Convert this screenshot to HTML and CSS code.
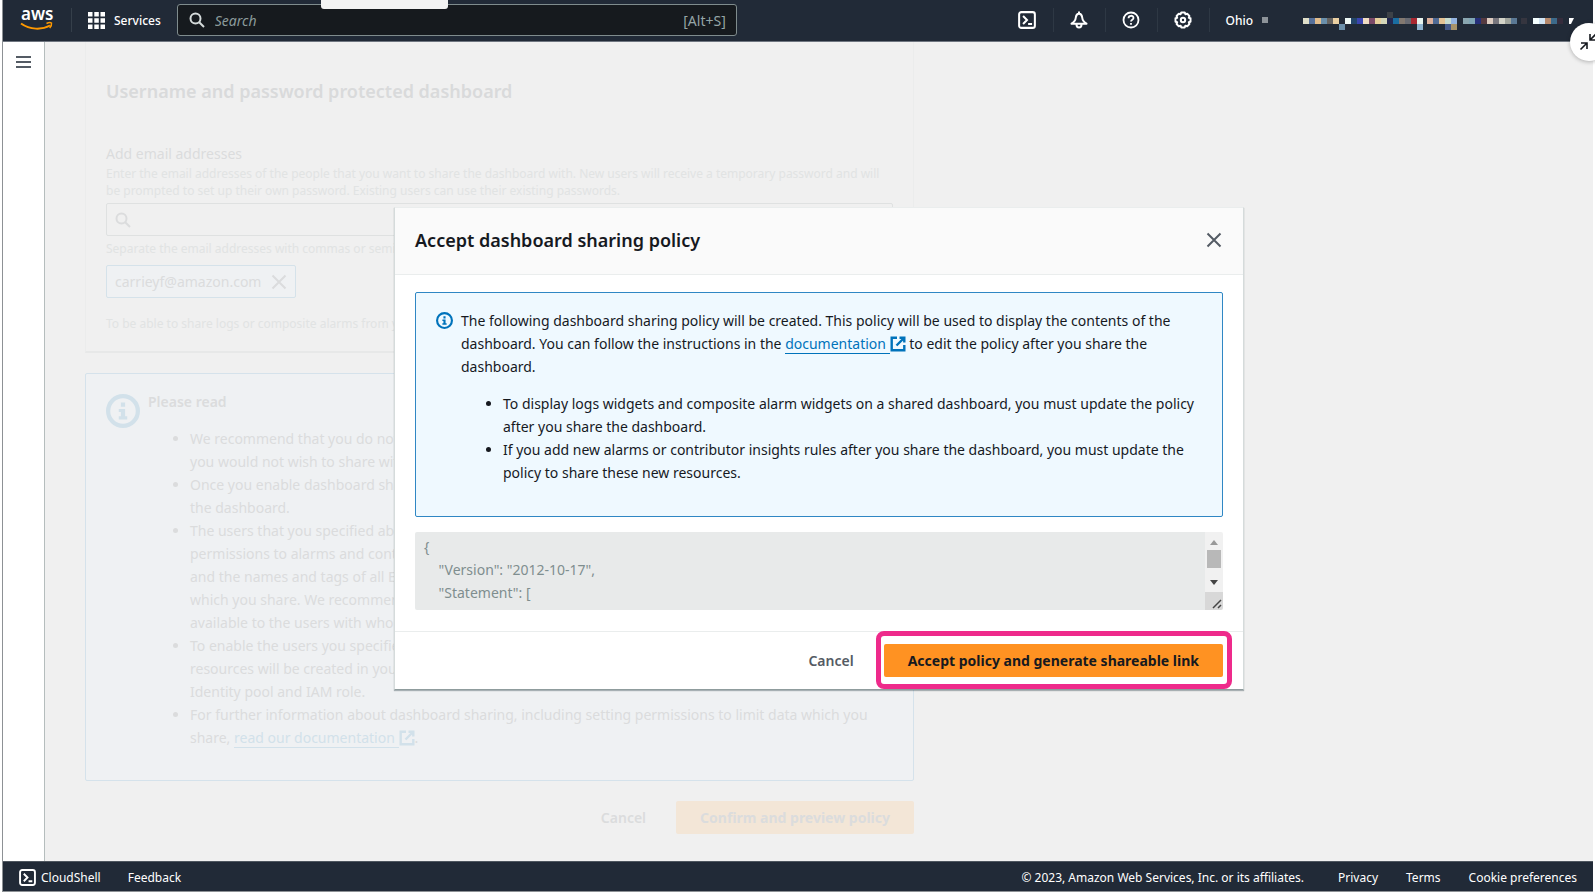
FILE: index.html
```
<!DOCTYPE html>
<html lang="en">
<head>
<meta charset="utf-8">
<title>CloudWatch - Share dashboard</title>
<link rel="stylesheet" href="styles.css">
</head>
<body>
<svg class="defs" aria-hidden="true">
  <symbol id="i-search" viewBox="0 0 16 16"><circle cx="6.5" cy="6.5" r="5" fill="none" stroke="currentColor" stroke-width="2"/><path d="M10.2 10.2 15 15" stroke="currentColor" stroke-width="2"/></symbol>
  <symbol id="i-close" viewBox="0 0 16 16"><path d="M1.5 1.5 14.5 14.5M14.5 1.5 1.5 14.5" fill="none" stroke="currentColor" stroke-width="2"/></symbol>
  <symbol id="i-info" viewBox="0 0 16 16"><circle cx="8" cy="8" r="7" fill="none" stroke="currentColor" stroke-width="2"/><path d="M7 4h2v2H7zM6 7h3v3.500h1v1.500H6v-1.500h1V8.500H6z" fill="currentColor"/></symbol>
  <symbol id="i-external" viewBox="0 0 16 16"><path d="M7 1.700H1.700v12.600h12.600V9M9.500 1.700h4.800v4.800M14 2 6.500 9.500" fill="none" stroke="currentColor" stroke-width="2.400"/></symbol>
  <symbol id="i-shell" viewBox="0 0 16 16"><rect x="1" y="1" width="14" height="14" rx="2" fill="none" stroke="currentColor" stroke-width="1.800"/><path d="M4.500 4.500 8 8l-3.500 3.500M9 11.500h3.500" fill="none" stroke="currentColor" stroke-width="1.800"/></symbol>
</svg>

<div class="frame">
  <header class="topbar">
    <a class="logo" href="#" aria-label="AWS home">
      <svg width="36" height="38" viewBox="0 0 36 38"><text class="logo-text" x="2" y="19">aws</text><path d="M2 22.500C11 29 23 29 31 24.500" fill="none" stroke="#f90" stroke-width="2"/><path d="M27.500 22.500c2-1 4-1.200 5-.500.300 1.500-.500 3.500-1.800 5" fill="none" stroke="#f90" stroke-width="1.500"/></svg>
    </a>
    <button class="services" type="button">
      <svg width="17" height="17" viewBox="0 0 17 17" fill="#fff"><path d="M0 0h4.500v4.500H0zM6.300 0h4.500v4.500H6.300zM12.500 0H17v4.500h-4.500zM0 6.300h4.500v4.500H0zM6.300 6.300h4.500v4.500H6.300zM12.500 6.300H17v4.500h-4.500zM0 12.500h4.500V17H0zM6.300 12.500h4.500V17H6.300zM12.500 12.500H17V17h-4.500z"/></svg>
      Services
    </button>
    <label class="search">
      <svg width="16" height="16"><use href="#i-search"/></svg>
      <input type="search" placeholder="Search" aria-label="Search">
      <span>[Alt+S]</span>
    </label>
    <nav class="tools">
      <button type="button" aria-label="CloudShell"><svg width="18" height="18"><use href="#i-shell"/></svg></button>
      <button type="button" aria-label="Notifications"><svg width="18" height="18" viewBox="0 0 18 18" fill="none" stroke="#fff" stroke-width="2" stroke-linejoin="round"><path d="M9 .500v2M9 2.500C6.500 3 6 4.800 5.800 6.500c-.300 3-1.300 4.500-4.300 6.200h15c-3-1.700-4-3.200-4.300-6.200C12 4.800 11.500 3 9 2.500zM6.500 13.500c0 4 5 4 5 0"/></svg></button>
      <button type="button" aria-label="Help"><svg width="18" height="18" viewBox="0 0 18 18" fill="none" stroke="#fff" stroke-width="1.800"><circle cx="9" cy="9" r="7.500"/><path d="M6.500 7.200C6.500 4 11.500 4 11.500 7c0 1.800-2.500 1.800-2.500 3.600M9 12v1.800"/></svg></button>
      <button type="button" aria-label="Settings"><svg width="18" height="18" viewBox="0 0 18 18" fill="none" stroke="#fff" stroke-width="2" stroke-linejoin="round"><circle cx="9" cy="9" r="2.200"/><path d="M7.300 1.500h3.400l.700 1.700 1.800-.500 2.200 2.200-.600 1.800 1.700.600v3.400l-1.700.600.600 1.800-2.200 2.200-1.800-.600-.700 1.800H7.300l-.700-1.800-1.800.600-2.200-2.200.600-1.800-1.700-.600V7.300l1.700-.600-.600-1.800 2.200-2.200 1.800.500z"/></svg></button>
    </nav>
    <button class="region" type="button">Ohio <i></i></button>
    <svg class="account" width="272" height="20" viewBox="0 0 816 60" role="img" aria-label="Account">
      <g id="cells"></g>
      <path d="M798 18h15l-9 18h-6z" fill="#fff"/>
    </svg>
    <span class="tab"></span>
    <button class="collapse" type="button" aria-label="Exit full screen"><svg width="20" height="20" viewBox="0 0 20 20" fill="none" stroke="#16191f" stroke-width="1.600"><path d="M2 11h6v6M8 11l-6.500 6.500M11 2v6h6M11 8l6.500-6.500"/></svg></button>
  </header>

  <div class="main">
    <aside class="sidebar"><button type="button" aria-label="Open navigation"><svg width="15" height="14" viewBox="0 0 15 14" stroke="#545b64" stroke-width="2"><path d="M0 2h15M0 7h15M0 12h15"/></svg></button></aside>
    <main class="content">
      <section class="card">
        <h2>Username and password protected dashboard</h2>
        <label class="field-label" for="emails">Add email addresses</label>
        <p class="hint">Enter the email addresses of the people that you want to share the dashboard with. New users will receive a temporary password and will be prompted to set up their own password. Existing users can use their existing passwords.</p>
        <div class="email-box"><svg width="16" height="16"><use href="#i-search"/></svg><input id="emails" type="text"></div>
        <p class="hint below">Separate the email addresses with commas or semicolons.</p>
        <div class="token">carrieyf@amazon.com <button type="button" aria-label="Remove carrieyf@amazon.com"><svg width="16" height="16"><use href="#i-close"/></svg></button></div>
        <p class="hint last">To be able to share logs or composite alarms from your</p>
      </section>

      <section class="notice">
        <svg class="notice-icon" width="34" height="34"><use href="#i-info"/></svg>
        <div>
          <h3>Please read</h3>
          <ul>
            <li>We recommend that you do not<br>you would not wish to share with</li>
            <li>Once you enable dashboard sharing,<br>the dashboard.</li>
            <li>The users that you specified above<br>permissions to alarms and contributor<br>and the names and tags of all EC2<br>which you share. We recommend<br>available to the users with whom</li>
            <li>To enable the users you specified<br>resources will be created in your<br>Identity pool and IAM role.</li>
            <li>For further information about dashboard sharing, including setting permissions to limit data which you share, <a href="#">read our documentation&nbsp;</a><svg width="16" height="16"><use href="#i-external"/></svg>.</li>
          </ul>
        </div>
      </section>

      <div class="actions">
        <button class="link-btn" type="button">Cancel</button>
        <button class="primary" type="button">Confirm and preview policy</button>
      </div>
    </main>

    <div class="overlay">
      <div class="modal" role="dialog" aria-labelledby="dlg-title">
        <div class="modal-head">
          <h1 id="dlg-title">Accept dashboard sharing policy</h1>
          <button type="button" aria-label="Close"><svg width="16" height="16"><use href="#i-close"/></svg></button>
        </div>
        <div class="modal-body">
          <div class="info">
            <svg class="info-icon" width="17" height="17"><use href="#i-info"/></svg>
            <div>
              <p>The following dashboard sharing policy will be created. This policy will be used to display the contents of the dashboard. You can follow the instructions in the <a href="#">documentation&nbsp;</a><svg width="16" height="16"><use href="#i-external"/></svg> to edit the policy after you share the dashboard.</p>
              <ul>
                <li>To display logs widgets and composite alarm widgets on a shared dashboard, you must update the policy after you share the dashboard.</li>
                <li>If you add new alarms or contributor insights rules after you share the dashboard, you must update the policy to share these new resources.</li>
              </ul>
            </div>
          </div>
          <div class="policy">
            <textarea rows="3" disabled aria-label="Policy document">{
    "Version": "2012-10-17",
    "Statement": [</textarea>
            <svg width="18" height="78" viewBox="0 0 18 78" aria-hidden="true"><path d="M0 0h18v60H0z" fill="#f1f1f1"/><path d="M0 60h18v18H0z" fill="#d8d8d8"/><path d="M2 18h14v18H2z" fill="#b8b8b8"/><path d="m5 13 4-5 4 5z" fill="#999"/><path d="m5 48 4 5 4-5z" fill="#444"/><path d="m8 76 8-8M13 76l3-3" stroke="#444" stroke-width="1.500"/></svg>
          </div>
        </div>
        <div class="modal-foot">
          <button class="link-btn" type="button">Cancel</button>
          <span class="highlight"><button class="primary" type="button">Accept policy and generate shareable link</button></span>
        </div>
      </div>
    </div>
  </div>

  <footer class="bottombar">
    <a class="shell" href="#"><svg width="17" height="17"><use href="#i-shell"/></svg>CloudShell</a>
    <a href="#">Feedback</a>
    <span class="copyright">© 2023, Amazon Web Services, Inc. or its affiliates.</span>
    <a class="legal" href="#">Privacy</a>
    <a class="legal" href="#">Terms</a>
    <a class="legal" href="#">Cookie preferences</a>
  </footer>
</div>
<script src="account.js"></script>
</body>
</html>
```
FILE: account.js
```
// Coloured cells of the masked account name: [x, row, colour]
const cells = [
  [0,1,'#e0dfc9'],[18,1,'#56709a'],[36,1,'#e2bd8c'],[54,1,'#6a8faa'],[72,1,'#666360'],[90,1,'#ead0a3'],
  [108,2,'#6a8faa'],[126,1,'#edf8f5'],[144,1,'#24476b'],[162,1,'#3b45b0'],[180,1,'#f0dcc2'],[198,1,'#7c4a68'],
  [216,1,'#e6d09c'],[234,1,'#d3d6b8'],[252,0,'#3d4248'],[252,1,'#232850'],[270,1,'#1a6da0'],[288,1,'#827870'],
  [306,1,'#686a72'],[324,1,'#a82832'],[342,1,'#e8f4ee'],[342,2,'#8fb3d0'],
  [372,1,'#dcb09c'],[390,1,'#506a94'],[408,1,'#e4c294'],[426,1,'#c8dcd0'],[426,2,'#44588a'],[444,1,'#94b4e0'],[444,2,'#a8946a'],
  [480,1,'#8aa6b0'],[498,1,'#7fa5b4'],[516,1,'#252f78'],[534,1,'#553a40'],[552,1,'#dccbc0'],[570,1,'#77757c'],
  [588,1,'#d3d3c8'],[606,1,'#a0a49c'],[624,1,'#5a7894'],[654,1,'#35353f'],
  [690,1,'#f5ffff'],[708,1,'#d0e4f4'],[726,1,'#b4886c'],[744,1,'#3c6a8a'],[762,1,'#352c3c']
];
const group = document.getElementById('cells');
for (const [x, row, colour] of cells) {
  const r = document.createElementNS('http://www.w3.org/2000/svg', 'rect');
  r.setAttribute('x', x);
  r.setAttribute('y', row * 18);
  r.setAttribute('width', 18);
  r.setAttribute('height', 18);
  r.setAttribute('fill', colour);
  group.appendChild(r);
}
```
FILE: styles.css
```
* { box-sizing: border-box; }
body {
  margin: 0;
  background: #fff;
  font: 14px/23px "Noto Sans", "Open Sans", sans-serif;
  color: #16191f;
  overflow: hidden;
}
h1, h2, h3, p, ul { margin: 0; }
button, input, textarea { font: inherit; color: inherit; }
button { background: none; border: 0; padding: 0; cursor: pointer; }
svg { display: block; flex: none; }
.defs { position: absolute; width: 0; height: 0; }

.frame {
  min-height: calc(100vh - 1px);
  margin: 0 2px 1px;
  border-left: 1px solid #8d9195;
  border-bottom: 1px solid #8d9195;
  display: flex;
  flex-direction: column;
}

/* Top bar */
.topbar {
  position: relative;
  display: flex;
  align-items: center;
  height: 42px;
  padding: 0 18px 1px 16px;
  background: #212a37;
  border-bottom: 1px solid #6f7680;
  color: #fff;
  font-size: 12px;
}
.logo { display: flex; align-items: center; gap: 16px; }
.logo::after { content: ""; width: 1px; height: 24px; background: #353f4a; }
.logo-text { font: 600 17px "Noto Sans", sans-serif; fill: #fff; }
.services { display: flex; align-items: center; gap: 9px; margin: 0 16px; font-weight: 500; }
.search {
  display: flex;
  align-items: center;
  gap: 10px;
  flex: 0 1 560px;
  height: 32px;
  padding: 0 10px 0 11px;
  background: #161a1e;
  border: 1px solid #7f8c8d;
  border-radius: 3px;
  font-size: 14px;
  color: #95a5a6;
}
.search svg { color: #d5dbdb; }
.search input { flex: 1; min-width: 0; background: none; border: 0; padding: 0; outline: 0; }
.search input::placeholder { color: #8b9a9b; font-style: italic; }
.tools { display: flex; margin-left: auto; }
.tools button { padding: 3px 17px 3px 16px; border-right: 1px solid #2e3844; }
.region { display: flex; align-items: center; gap: 9px; padding: 0 35px 0 15px; font-weight: 500; }
.region i { width: 6px; height: 6px; background: #8d9399; }
.account { margin-top: 3px; }
.tab {
  position: absolute;
  top: 0;
  left: 318px;
  width: 127px;
  height: 9px;
  background: #f2f3f3;
  border-radius: 0 0 3px 3px;
}
.collapse {
  position: absolute;
  top: 23px;
  right: -15px;
  z-index: 3;
  width: 38px;
  height: 38px;
  display: grid;
  place-items: center;
  background: #fff;
  border-radius: 50%;
  box-shadow: 0 1px 4px #0004;
}

/* Page behind the dialog */
.main { position: relative; flex: 1; display: flex; background: #f0f0f0; }
.sidebar { width: 42px; padding: 10px 13px; background: #fff; border-right: 1px solid #b5bdbd; }
.content { flex: 1; min-width: 0; max-width: 909px; padding: 0 40px 24px; color: #dbdcdd; }
.card {
  padding: 37px 20px 19px;
  border: 1px solid #ebecec;
  border-top: 0;
  border-bottom: 2px solid #e7e8e8;
}
.card h2 { font-size: 18px; line-height: 24px; font-weight: 600; color: #d9dadb; }
.field-label { display: block; margin-top: 39px; }
.hint { font-size: 12px; line-height: 17px; color: #e1e3e3; }
.email-box {
  display: flex;
  align-items: center;
  gap: 8px;
  height: 33px;
  margin-top: 4px;
  padding: 0 8px;
  border: 1px solid #dfe1e1;
  border-radius: 2px;
}
.email-box input { flex: 1; min-width: 0; background: none; border: 0; outline: 0; }
.hint.below { margin-top: 4px; }
.token {
  display: inline-flex;
  align-items: center;
  gap: 10px;
  height: 33px;
  margin-top: 8px;
  padding: 0 8px;
  border: 1px solid #d5e2ea;
  border-radius: 2px;
  background: #eff1f3;
}
.hint.last { margin-top: 17px; }
.notice {
  display: flex;
  gap: 8px;
  margin-top: 20px;
  padding: 16px 20px 31px;
  border: 1px solid #d5e2eb;
  border-radius: 2px;
  background: #eff1f3;
}
.notice-icon { margin-top: 4px; color: #d2e1ea; }
.notice h3 { font-size: 14px; font-weight: 600; }
.notice ul, .info ul { margin-top: 14px; padding-left: 42px; }
.notice a { color: #d2e1ea; }
a { text-decoration: none; color: inherit; }
li a, p a { border-bottom: 1px solid; }
li svg, p svg { display: inline-block; vertical-align: -3px; }
.notice li svg { color: #d2e1ea; }
.actions { display: flex; justify-content: flex-end; margin-top: 20px; }
.link-btn { padding: 0 30px 0 20px; font-weight: 600; }
.primary { height: 33px; padding: 0 24px; border-radius: 2px; font-weight: 700; background: #f3e6d7; }

/* Dialog */
.overlay {
  position: absolute;
  inset: 0 0 0 42px;
  display: flex;
  align-items: center;
  justify-content: center;
  padding-bottom: 7px;
}
.modal {
  width: 850px;
  max-width: 100%;
  background: #fff;
  border: 1px solid #d5dbdb;
  border-top-color: #eaeded;
  border-bottom: 1px solid #8f9c9d;
  box-shadow: 0 1px 1px #001c244d;
}
.modal-head {
  display: flex;
  align-items: center;
  justify-content: space-between;
  height: 67px;
  padding: 0 21px 2px 20px;
  background: #fafafa;
  border-bottom: 1px solid #eaeded;
}
.modal-head h1 { font-size: 18px; line-height: 24px; font-weight: 600; }
.modal-head button { color: #545b64; }
.modal-body { padding: 17px 20px 21px; }
.info {
  display: flex;
  gap: 8px;
  padding: 16px 20px 32px;
  border: 1px solid #2f87c4;
  border-radius: 2px;
  background: #eff9ff;
}
.info-icon { margin-top: 3px; color: #0073bb; }
.info a, .info p svg { color: #0073bb; }
.policy { display: flex; margin-top: 15px; border-radius: 2px; overflow: hidden; }
.policy textarea {
  flex: 1;
  height: 78px;
  padding: 3px 9px;
  border: 0;
  resize: none;
  overflow: hidden;
  background: #e8eaea;
  color: #7f8e8f;
}
.modal-foot {
  display: flex;
  align-items: center;
  justify-content: flex-end;
  padding: 12px 20px;
  border-top: 1px solid #eaeded;
}
.modal-foot .link-btn { color: #545b64; }
.modal-foot .primary { background: #ff9222; color: #16191f; }
.highlight { position: relative; display: flex; }
.highlight::after {
  content: "";
  position: absolute;
  inset: -13px -9px -12px -8px;
  border: 5px solid #ee2a8b;
  border-radius: 8px;
  pointer-events: none;
}

/* Bottom bar */
.bottombar {
  display: flex;
  align-items: center;
  height: 30px;
  padding: 1px 16px 0;
  background: #212a37;
  border-top: 1px solid #4e565f;
  color: #fff;
  font-size: 12px;
}
.shell { display: flex; align-items: center; gap: 5px; margin-right: 27px; }
.copyright { margin: 0 6px 0 auto; }
.legal { margin-left: 28px; }
```
